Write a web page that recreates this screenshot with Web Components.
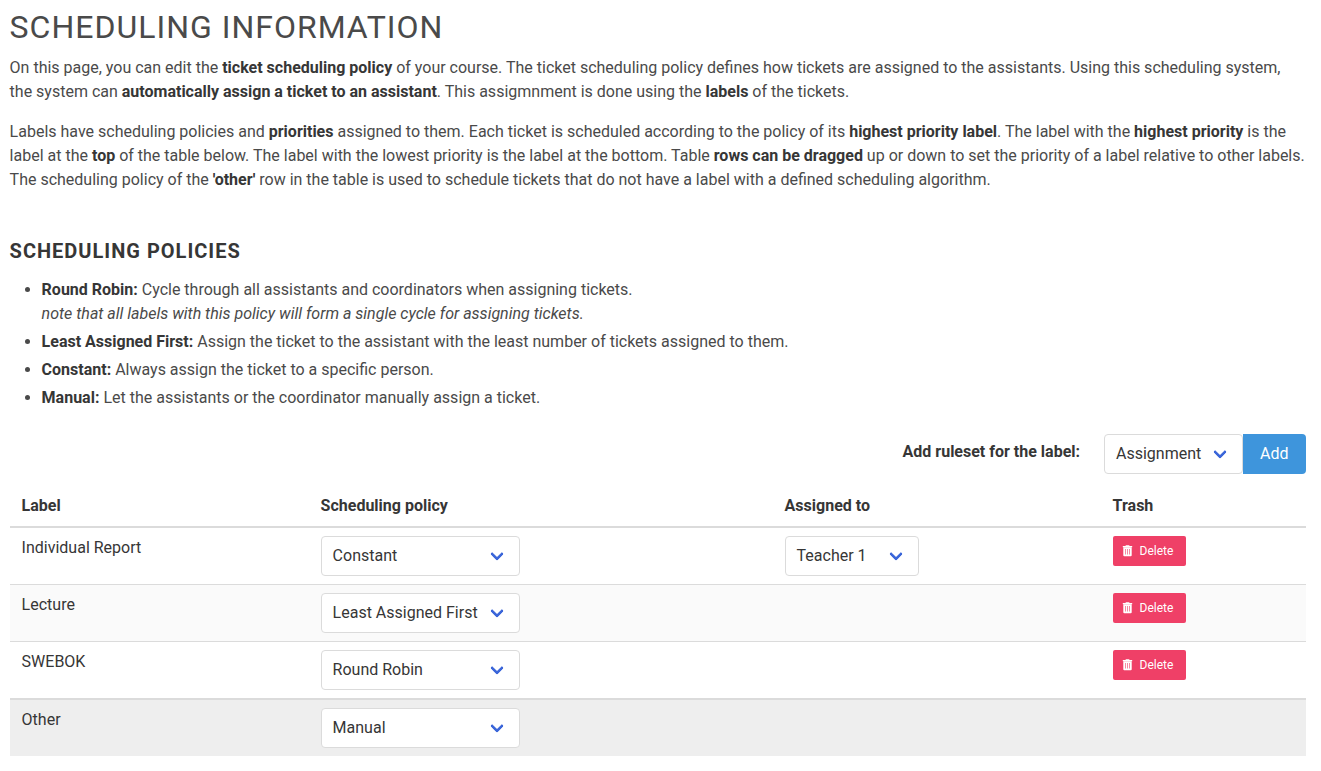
<!DOCTYPE html>
<html lang="en">
<head>
<meta charset="utf-8">
<title>Scheduling information</title>
<style>
html, body { margin: 0; background: #fff; }
body { font: 400 16px/24px Roboto, "Liberation Sans", sans-serif; color: #4a4a4a; text-rendering: optimizeLegibility; }
strong { color: #363636; font-weight: 700; }
</style>
</head>
<body>
<scheduling-page>
  <page-heading level="1">Scheduling information</page-heading>
  <text-block>On this page, you can edit the <strong>ticket scheduling policy</strong> of your course. The ticket scheduling policy defines how tickets are assigned to the assistants. Using this scheduling system, the system can <strong>automatically assign a ticket to an assistant</strong>. This assigmnment is done using the <strong>labels</strong> of the tickets.</text-block>
  <text-block>Labels have scheduling policies and <strong>priorities</strong> assigned to them. Each ticket is scheduled according to the policy of its <strong>highest priority label</strong>. The label with the <strong>highest priority</strong> is the label at the <strong>top</strong> of the table below. The label with the lowest priority is the label at the bottom. Table <strong>rows can be dragged</strong> up or down to set the priority of a label relative to other labels. The scheduling policy of the <strong>'other'</strong> row in the table is used to schedule tickets that do not have a label with a defined scheduling algorithm.</text-block>
  <page-heading level="2">Scheduling policies</page-heading>
  <policy-list>
    <policy-item><strong>Round Robin:</strong> Cycle through all assistants and coordinators when assigning tickets.<br><i>note that all labels with this policy will form a single cycle for assigning tickets.</i></policy-item>
    <policy-item><strong>Least Assigned First:</strong> Assign the ticket to the assistant with the least number of tickets assigned to them.</policy-item>
    <policy-item><strong>Constant:</strong> Always assign the ticket to a specific person.</policy-item>
    <policy-item><strong>Manual:</strong> Let the assistants or the coordinator manually assign a ticket.</policy-item>
  </policy-list>
  <add-ruleset>
    <span slot="label">Add ruleset for the label:</span>
    <select-box style="width:138.600px">Assignment</select-box>
    <span slot="action">Add</span>
  </add-ruleset>
  <rule-table>
    <rule-row kind="head"><span>Label</span><span slot="policy">Scheduling policy</span><span slot="person">Assigned to</span><span slot="trash">Trash</span></rule-row>
    <rule-row><span>Individual Report</span><select-box slot="policy" style="width:199px">Constant</select-box><select-box slot="person" style="width:134px">Teacher 1</select-box><delete-button slot="trash">Delete</delete-button></rule-row>
    <rule-row kind="striped"><span>Lecture</span><select-box slot="policy" style="width:199px">Least Assigned First</select-box><delete-button slot="trash">Delete</delete-button></rule-row>
    <rule-row kind="last"><span>SWEBOK</span><select-box slot="policy" style="width:199px">Round Robin</select-box><delete-button slot="trash">Delete</delete-button></rule-row>
    <rule-row kind="other"><span>Other</span><select-box slot="policy" style="width:199px">Manual</select-box></rule-row>
  </rule-table>
</scheduling-page>
<script>
function define(name, html) {
  const template = document.createElement('template');
  template.innerHTML = html;
  customElements.define(name, class extends HTMLElement {
    constructor() {
      super();
      this.attachShadow({ mode: 'open' }).append(template.content.cloneNode(true));
    }
  });
}

define('scheduling-page', `<style>
:host { display: block; box-sizing: border-box; padding: 9px 15.4px 15px 9.6px; }
</style><slot></slot>`);

define('page-heading', `<style>
:host { display: block; text-transform: uppercase; letter-spacing: 1px; }
:host([level="1"]) { font-size: 32px; line-height: 36px; margin-bottom: 11px; }
:host([level="2"]) { font-size: 20px; line-height: 24px; font-weight: 700; color: #363636; margin: 47px 0 15px; }
</style><slot></slot>`);

define('text-block', `<style>
:host { display: block; margin-bottom: 16px; }
</style><slot></slot>`);

define('policy-list', `<style>
:host { display: flex; flex-direction: column; gap: 4px; margin-left: 32px; }
</style><slot></slot>`);

define('policy-item', `<style>
:host { display: list-item; list-style: disc outside; }
</style><slot></slot>`);

define('select-box', `<style>
:host { display: flex; box-sizing: border-box; height: 40px; align-items: center; justify-content: space-between;
  padding: 0 17px 1px 11px; border: 1px solid #dbdbdb; border-radius: 4px; background: #fff; color: #363636; font-weight: 400; white-space: nowrap; }
i { box-sizing: border-box; width: 10px; height: 10px; border: 3px solid #3b66d9; border-top: 0; border-right: 0; border-radius: 2px;
  transform: rotate(-45deg); margin-top: -4px; }
</style><span><slot></slot></span><i></i>`);

define('add-ruleset', `<style>
:host { display: flex; justify-content: flex-end; margin-top: 24px; height: 40px; }
.label { font-weight: 700; color: #363636; padding-top: 6px; margin-right: 24px; }
.action { box-sizing: border-box; width: 63px; height: 40px; padding: 8px 0 0 0.400px; text-align: center; color: #fff; background: #3e95dc; border-radius: 0 4px 4px 0; }
</style><span class="label"><slot name="label"></slot></span><slot></slot><span class="action"><slot name="action"></slot></span>`);

define('rule-table', `<style>
:host { display: block; margin-top: 12px; color: #363636; }
</style><slot></slot>`);

define('rule-row', `<style>
:host { display: grid; grid-template-columns: 299px 464px 328px 1fr; border-bottom: 1px solid #dbdbdb; min-height: 56px; }
:host([kind="head"]) { font-weight: 700; border-bottom-width: 2px; min-height: 0; }
:host([kind="striped"]) { background: #fafafa; }
:host([kind="last"]) { border-bottom-width: 2px; }
:host([kind="other"]) { background: #eee; border-bottom: 0; }
div { padding: 8px 12px; }
</style><div><slot></slot></div><div><slot name="policy"></slot></div><div><slot name="person"></slot></div><div><slot name="trash"></slot></div>`);

define('delete-button', `<style>
:host { display: flex; box-sizing: border-box; width: 73px; height: 30px; align-items: center; padding: 0 0 0 9.400px; gap: 6.600px;
  border-radius: 2px; background: #ef4067; color: #fff; font-size: 12px; line-height: 18px; }
svg { display: block; width: 11px; height: 12px; }
</style><svg viewBox="0 0 11 12" fill="currentColor"><path d="M3.900.3h3.200l.5.800h2.600V2.300H.8V1.100h2.600z"/><path fill-rule="evenodd" d="M1.300 2.300h8.400v7.900q0 1-1 1H2.300q-1 0-1-1zM3 4v5.600h.6V4zm2.200 0v5.600h.6V4zm2.200 0v5.600H8V4z"/></svg><span><slot></slot></span>`);
</script>
</body>
</html>
